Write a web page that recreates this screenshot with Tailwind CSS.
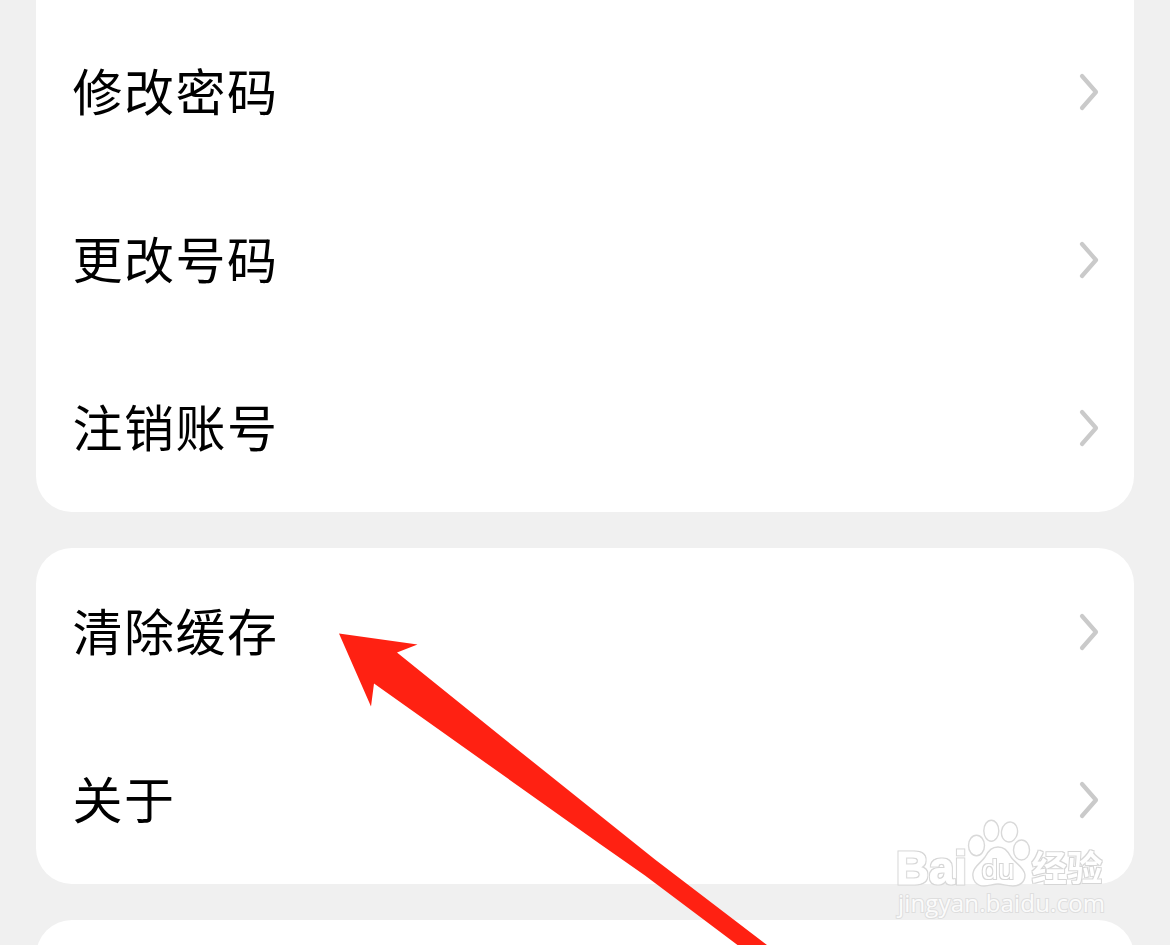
<!DOCTYPE html>
<html lang="zh-CN">
<head>
<meta charset="utf-8">
<title>设置</title>
<script src="https://cdn.jsdelivr.net/npm/@tailwindcss/browser@4"></script>
</head>
<body class="relative h-[945px] w-[1170px] overflow-hidden bg-[#f0f0f0] font-['Noto_Sans_CJK_SC',sans-serif] text-[50px] tracking-[1.5px] text-black">
<svg class="hidden"><symbol id="chevron" viewBox="0 0 22 40"><path d="M4 4 L18 20 L4 36" fill="none" stroke="#cacaca" stroke-width="4.200" stroke-linecap="round" stroke-linejoin="round"/></symbol></svg>
<main class="flex h-[945px] flex-col gap-9 px-9">
  <section class="rounded-b-[36px] bg-white pt-2">
    <div class="flex h-[168px] items-center justify-between pr-[34px] pl-[36.5px]"><span class="pb-[6px]">修改密码</span><svg class="h-10 w-[22px]"><use href="#chevron"/></svg></div>
    <div class="flex h-[168px] items-center justify-between pr-[34px] pl-[36.5px]"><span class="pb-[6px]">更改号码</span><svg class="h-10 w-[22px]"><use href="#chevron"/></svg></div>
    <div class="flex h-[168px] items-center justify-between pr-[34px] pl-[36.5px]"><span class="pb-[6px]">注销账号</span><svg class="h-10 w-[22px]"><use href="#chevron"/></svg></div>
  </section>
  <section class="rounded-[36px] bg-white">
    <div class="flex h-[168px] items-center justify-between pr-[34px] pl-[36.5px]"><span class="pb-[6px]">清除缓存</span><svg class="h-10 w-[22px]"><use href="#chevron"/></svg></div>
    <div class="flex h-[168px] items-center justify-between pr-[34px] pl-[36.5px]"><span class="pb-[6px]">关于</span><svg class="h-10 w-[22px]"><use href="#chevron"/></svg></div>
  </section>
  <section class="min-h-0 flex-1 overflow-hidden"><div class="h-[168px] rounded-[36px] bg-white"></div></section>
</main>
<svg class="absolute inset-0 tracking-normal" width="1170" height="945" viewBox="0 0 1170 945">
  <defs>
    <filter id="rim" x="-5%" y="-10%" width="110%" height="120%" color-interpolation-filters="sRGB">
      <feMorphology in="SourceAlpha" operator="dilate" radius="1" result="d"/>
      <feGaussianBlur in="d" stdDeviation="0.500" result="b"/>
      <feFlood flood-color="#d6d6d6"/>
      <feComposite in2="b" operator="in" result="edge"/>
      <feMerge><feMergeNode in="edge"/><feMergeNode in="SourceGraphic"/></feMerge>
    </filter>
  </defs>
  <path fill="#ff2112" d="M339 633.5 L417.500 644.500 L397 652.500 L500 735.500 L655 859.500 L767 945 L737.500 945 L645 875.500 L600 844 L374 683.500 L371 706.500Z"/>
  <g fill="#fff">
    <g stroke="#d9d9d9" stroke-width="1.400">
      <ellipse cx="976.500" cy="845.500" rx="8" ry="10.200"/>
      <ellipse cx="991.300" cy="830.700" rx="7.500" ry="10.500"/>
      <ellipse cx="1009.500" cy="832" rx="8" ry="10" transform="rotate(10 1009.500 832)"/>
      <ellipse cx="1021.500" cy="850" rx="8" ry="10"/>
      <path d="M998 847 C1004 847 1007 850 1011 857 C1015 863 1025 868 1025 875 C1025 882 1020 886 1013 886 C1006 886 1003 884 998 884 C993 884 990 886 984 886 C976 886 972 880 973 873 C974 866 981 863 985 857 C989 850 992 847 998 847Z"/>
    </g>
    <g filter="url(#rim)">
      <text x="896" y="883.500" font-family="Liberation Sans" font-weight="700" font-size="47" textLength="71" lengthAdjust="spacingAndGlyphs" stroke="#fff" stroke-width="1">Bai</text>
      <text x="981.500" y="879" font-family="Liberation Sans" font-size="28" textLength="33" lengthAdjust="spacingAndGlyphs">du</text>
      <text x="1031.500" y="881" font-family="Noto Sans CJK SC" font-weight="700" font-size="35" textLength="71" lengthAdjust="spacingAndGlyphs">经验</text>
    </g>
    <text x="898" y="912" font-family="Open Sans" font-size="24" textLength="207" fill="#fbfbfb" stroke="#dedede" stroke-width="2" paint-order="stroke">jingyan.baidu.com</text>
  </g>
</svg>
</body>
</html>
